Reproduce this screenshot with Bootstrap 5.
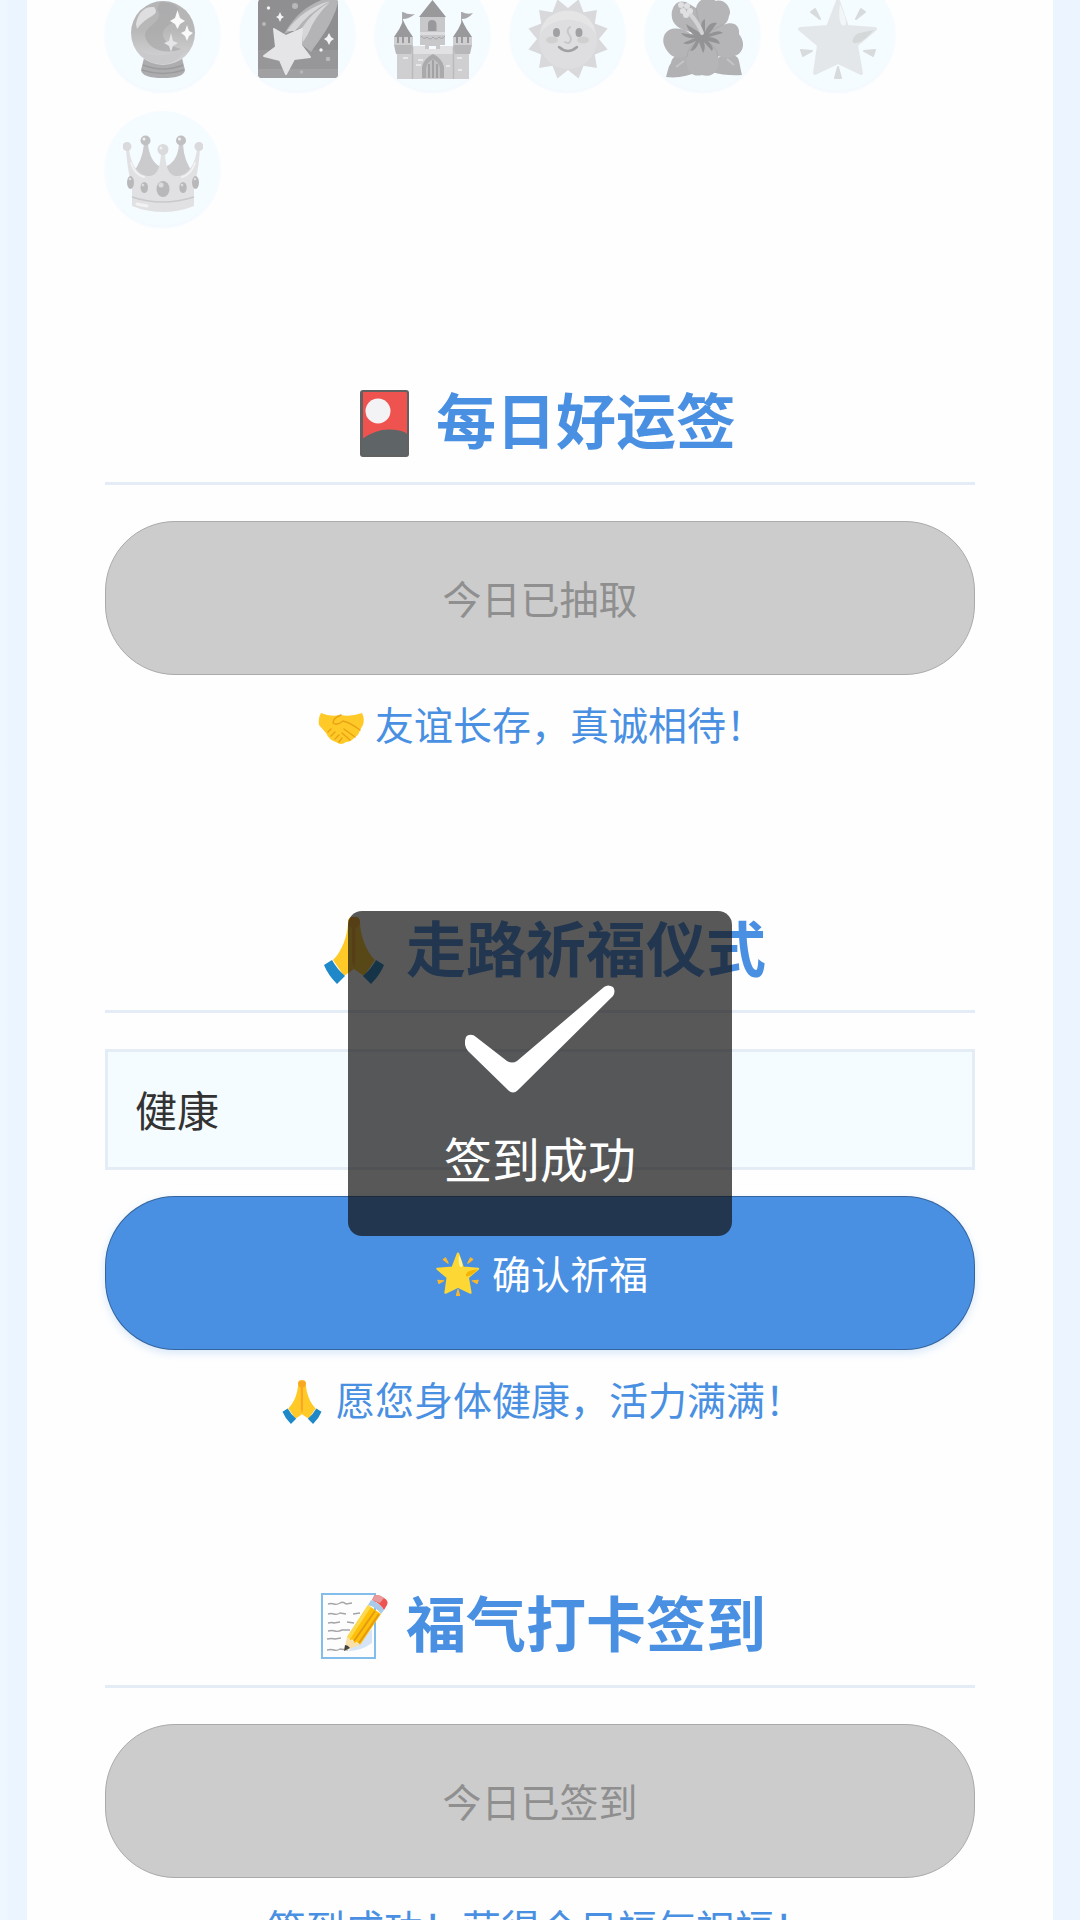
<!DOCTYPE html>
<html lang="zh-CN">
<head>
<meta charset="utf-8">
<meta name="viewport" content="width=device-width, initial-scale=1">
<title>每日好运签</title>
<link href="https://cdn.jsdelivr.net/npm/bootstrap@5.3.0/dist/css/bootstrap.min.css" rel="stylesheet">
<style>
  body { font-family: "Noto Sans CJK SC", "Noto Sans", sans-serif; background: linear-gradient(90deg, #f0f6ff 0, #eaf5ff 14px, #ebf4ff 100%); color: #333; }
  .screen { padding: 0 27px; }
  .sheet { background: #fefefe; padding: 0 78px; }
  .medals { gap: 20px; margin-top: -24px; margin-bottom: 153px; }
  .medal { width: 115px; height: 115px; background: #f5fcff; box-shadow: 0 2px 3px #f1f8ff; padding-top: 10px; }
  .medal svg { width: 80px; height: 80px; }
  .block { margin-bottom: 156px; }
  .block-title { font-size: 60px; line-height: 78px; font-weight: 700; color: #4a90e2; padding-bottom: 25px; border-bottom: 3px solid #e4ecf6; margin-bottom: 36px; gap: 12px; }
  .block-title svg { width: 80px; height: 78px; }
  .pill { height: 154px; border-radius: 70px; font-size: 39px; gap: 8px; border: 1px solid rgba(0,0,0,.2); padding-bottom: 8px; }
  .pill svg { width: 52px; height: 48px; }
  .pill-main, .pill-main:hover { background: #4a90e2; color: #fff; border-color: rgba(0,0,0,.3); box-shadow: 0 3px 8px rgba(74,144,226,.22); }
  .pill-off:disabled { background: #ccc; color: #8f8f8f; opacity: 1; border-color: #aaa; }
  .result { font-size: 39px; line-height: 56px; color: #4a90e2; margin: 20px 0 0; gap: 8px; }
  .result svg { width: 52px; height: 52px; }
  .wish { height: 121px; border: 3px solid #e4ecf6; border-radius: 0; background: #f5fcff; color: #333; font-size: 42px; padding: 0 27px 3px; margin-bottom: 26px; }
  .tip { top: 911px; width: 384px; height: 325px; border-radius: 14px; background: rgba(17,17,17,.7); color: #fff; font-size: 48px; line-height: 70px; padding-top: 74px; gap: 29px; }
  .tip svg { width: 150px; height: 108px; }
</style>
<script src="https://cdn.jsdelivr.net/npm/bootstrap@5.3.0/dist/js/bootstrap.bundle.min.js"></script>
</head>
<body>
<svg width="0" height="0" class="position-absolute" aria-hidden="true">
  <symbol id="pray" viewBox="0 0 80 70">
    <path fill="#ffca28" d="M40 2C35 1 34 4 34 9C33 22 28 36 19 45L30 61L40 54L50 61L61 45C52 36 47 22 46 9C46 4 45 1 40 2Z"/>
    <path fill="#f9a825" d="M34 8C34 3 36 2 40 2S46 3 46 8L44 12 41.500 13V46L40 53 38 46V13L36 12Z"/>
    <path fill="#1e88c9" d="M18 45L10 50Q14 60 23 69L31 61Q23 54 18 45ZM62 45L70 50Q66 60 57 69L49 61Q57 54 62 45Z"/>
  </symbol>
  <symbol id="star" viewBox="0 0 80 80">
    <path fill="#fdd835" stroke="#fdd835" stroke-width="4" stroke-linejoin="round" d="M40 2L49 28 77 30 58 46 63 74 40 63 17 74 21 46 2 30 30 28Z"/>
    <path fill="#fff59d" d="M42 5C45 12 48 19 48 24Q47 29 43 25Q40 18 42 5Z"/>
    <path fill="#f4b400" d="M76 31C68 33 59 33 56 38Q52 45 58 44C65 43 70 37 76 31Z"/>
    <g fill="#fbb72c" stroke="#fbb72c" stroke-width="2" stroke-linejoin="round"><path d="M13 13L17 10 22 20ZM67 13L63 10 58 20ZM3 51L14 52 5 57ZM77 51L66 52 75 57ZM40 68L43 79H37Z"/></g>
  </symbol>
</svg>

<div class="screen vh-100 overflow-hidden position-relative">
<main class="sheet d-flex flex-column">

  <div class="medals d-flex flex-wrap">
    <div class="medal rounded-circle d-flex align-items-center justify-content-center">
      <svg viewBox="0 0 80 80" role="img" aria-label="水晶球">
        <defs><linearGradient id="orb" x2="0" y2="1"><stop stop-color="#b5b5b6"/><stop offset=".45" stop-color="#b8b8b9"/><stop offset="1" stop-color="#d6d6d8"/></linearGradient></defs>
        <path fill="#adadaf" d="M21 59H59L62 71Q61 79 40 79T18 71Z"/>
        <path fill="none" stroke="#9b9b9d" stroke-width="1.500" d="M20 66Q40 74 60 66M19 71Q40 78 61 71"/>
        <circle cx="40" cy="34" r="32" fill="url(#orb)"/>
        <path fill="#a7a7a9" d="M37 3C62 3 59 18 46 26C35 33 39 45 58 50C41 57 24 49 22 37C21 27 43 22 34 10Z" opacity=".65"/>
        <path fill="#c9c9cb" d="M14 50Q34 64 65 47Q54 66 39 65Q22 65 14 50Z"/>
        <path fill="#dedee0" d="M13 25C15 13 22 7 31 8Q36 13 29 17C22 21 17 25 14 30Z"/>
        <path fill="#fafafa" d="M54.500 11L57 19 62 22 57 25 54.500 30 52 25 47 22 52 19ZM64 26L66 32 70 34 66 37 64 42 62 37 58 34 62 32Z"/>
        <path fill="#e5e5e7" d="M48 34L50 42 55 44 50 47 48 53 46 47 41 44 46 42Z"/>
      </svg>
    </div>
    <div class="medal rounded-circle d-flex align-items-center justify-content-center">
      <svg viewBox="0 0 80 80" role="img" aria-label="流星">
        <rect width="80" height="79" rx="4" fill="#8f8f91"/>
        <path fill="#979799" d="M0 51H80V70H0Z"/><path fill="#a1a1a3" d="M0 70H80V75Q80 79 76 79H4Q0 79 0 75Z"/>
        <path fill="#b4b4b6" d="M26 35C38 14 51 6 66 0H76Q80 0 80 4C74 26 62 40 53 53L43 45V29Z"/>
        <path fill="#d6d6d8" d="M29 32C39 17 54 7 72 2Q50 14 37 32ZM44 29Q54 13 72 3Q57 17 50 35L45 43Z"/>
        <path fill="#e5e5e7" stroke="#e5e5e7" stroke-width="2" stroke-linejoin="round" d="M16 30L28 37 44 30 43 46 52 58 36 60 28 75 22 61 6 57 18 48Z"/>
        <g fill="#f3f3f3"><path d="M22 13L23.500 16.500 26 18 23.500 19.500 22 23 20.500 19.500 18 18 20.500 16.500ZM71 34L73 38 76 40 73 42 71 46 69 42 66 40 69 38Z"/><circle cx="10.500" cy="9" r="1.700"/><circle cx="63" cy="51" r="1.700"/></g>
        <g fill="#b8b8ba"><circle cx="37" cy="7" r="3"/><circle cx="6" cy="25" r="2"/><circle cx="70" cy="60" r="2.300"/><circle cx="43.500" cy="73" r="1.700"/></g>
      </svg>
    </div>
    <div class="medal rounded-circle d-flex align-items-center justify-content-center">
      <svg viewBox="0 0 80 80" role="img" aria-label="城堡">
        <path fill="#cfcfd1" d="M4 50H76V80H4Z"/>
        <path fill="#e1e1e3" d="M19 47H33V50H47V47H61V55H19Z"/>
        <path fill="#c8c8ca" d="M27 18H52V46H47V50H43V47H36V50H32V46H27Z"/>
        <path fill="#dddddf" d="M27 33H52V36H27Z"/>
        <path fill="none" stroke="#a5a5a7" d="M28 37Q31 41 34 38Q37 42 40 38Q43 42 46 38Q49 41 52 37"/>
        <path fill="#99999b" d="M39.500 1L53 18H26ZM35 32V25Q35 21 39 21T43.500 25V32Z"/>
        <g id="turret"><path fill="#b7b7b9" d="M1 46H20L18 55H3Z"/><path fill="#cfcfd1" d="M1 38H20V46H1Z"/>
          <path fill="#99999b" d="M10 21C13 28 16 32 20 38H1C5 32 8 28 10 21ZM4 38H6V44H4ZM9 38H11V44H9ZM15 38H17V44H15Z"/>
          <path fill="none" stroke="#aeaeb0" d="M9.500 23V13"/></g>
        <use href="#turret" x="59"/>
        <path fill="#a8a8aa" d="M10 13Q15 16 22 15Q16 20 10 20ZM69 13Q74 16 80 14Q75 20 69 20Z"/>
        <path fill="none" stroke="#bababc" stroke-width="1.500" d="M19.500 48V80M60.500 48V80"/>
        <path fill="#aaaaac" d="M29 79V68Q31 59 40 55Q49 59 51 68V79Z"/><path fill="#c0c0c2" d="M33 79V69Q34 63 40 60Q46 63 47 69V79Z"/>
        <path fill="none" stroke="#98989a" stroke-width="1.500" d="M36 79V65M40 79V61M44 79V65"/>
        <path fill="#e7e7e8" d="M10 58H15V60H10ZM25 60H30V62H25ZM23 65H28V67H23ZM53 66H57V68H53ZM65 70H69V72H65ZM64 58H69V60H64Z"/>
      </svg>
    </div>
    <div class="medal rounded-circle d-flex align-items-center justify-content-center">
      <svg viewBox="0 0 80 80" role="img" aria-label="太阳">
        <path fill="#d9d9db" d="M71 40L79.600 50.600 66.800 55.500 69 69 55.500 66.800 50.600 79.600 40 71 29.400 79.600 24.500 66.800 11 69 13.200 55.500 .400 50.600 9 40 .400 29.400 13.200 24.500 11 11 24.500 13.200 29.400 .400 40 9 50.600 .400 55.500 13.200 69 11 66.800 24.500 79.600 29.400Z"/>
        <circle cx="40" cy="41" r="29" fill="#dedee0"/>
        <path fill="#e5e5e6" d="M12 35C16 4 64 4 68 35C58 17 24 15 12 35Z"/>
        <g fill="#a1a1a3"><ellipse cx="28.500" cy="33.500" rx="3.500" ry="4.500"/><ellipse cx="51" cy="33.500" rx="3.500" ry="4.500"/></g>
        <g fill="#d0d0d0"><ellipse cx="24" cy="41" rx="6" ry="3.500"/><ellipse cx="55" cy="41" rx="6" ry="3.500"/></g>
        <path fill="none" stroke="#c7c7c9" stroke-width="2" stroke-linecap="round" d="M42 28C36 33 43 36 43 40Q42 46 37 43"/>
        <path fill="none" stroke="#a1a1a3" stroke-width="2.500" stroke-linecap="round" d="M31 48Q40 56 49 48"/>
      </svg>
    </div>
    <div class="medal rounded-circle d-flex align-items-center justify-content-center">
      <svg viewBox="0 0 80 80" role="img" aria-label="木槿花">
        <path fill="#b1b1b3" d="M3 78C5 72 5 68 8 64C9 57 15 55 25 56L36 72Q20 80 3 78ZM79 76C77 69 77 64 75 59C69 53 59 55 54 60L49 73Q62 77 79 76Z"/>
        <path fill="#b5b5b7" d="M32 34C14 31 7 24 9 12Q12 0 23 3L33 9C35 -1 46 -3 53 2C62 -1 70 11 66 17Q65 24 60 26C72 21 77 28 76 35C83 44 80 53 74 56Q66 61 55 57C58 74 47 79 39 76C29 79 21 70 24 57Q12 62 5 53C-2 45 -1 35 6 31C13 28 22 30 28 35Z"/>
        <path fill="none" stroke="#aaaaac" d="M24 58Q24 47 37 42M55 58Q54 47 42 41M33 9L37 31M61 25L42 35"/>
        <path fill="#939395" d="M39 35L23 25Q26 34 32 36L18 34Q22 40 32 39L20 44Q25 47 33 42L27 52Q33 52 36 43L40 54Q43 50 41 43L49 52Q52 49 45 42L57 45Q56 39 46 38L60 34Q56 30 46 35L54 24Q46 22 42 33L42 20Q37 22 38 33Z"/>
        <path fill="none" stroke="#d3d3d5" stroke-width="4" stroke-linecap="round" d="M25 13Q35 23 39 34"/>
        <g fill="#e0e0e2"><circle cx="18" cy="6" r="3"/><circle cx="24" cy="7" r="3"/><circle cx="20" cy="12" r="3"/><circle cx="27" cy="12" r="3"/><circle cx="23" cy="16" r="3"/></g>
        <path fill="none" stroke="#c4c4c6" stroke-width="2" d="M13 68L21 62M71 66L64 60"/>
      </svg>
    </div>
    <div class="medal rounded-circle d-flex align-items-center justify-content-center">
      <svg class="opacity-50" viewBox="0 0 80 80" role="img" aria-label="星星" filter="grayscale(1)"><use href="#star"/></svg>
    </div>
    <div class="medal rounded-circle d-flex align-items-center justify-content-center">
      <svg viewBox="0 0 80 80" role="img" aria-label="皇冠">
        <path fill="#cbcbcd" d="M21 10H25C26 22 31 29 36 32L38 44H25L10 38Q19 28 21 10ZM56 10H60Q61 28 70 38L55 44H42L44 32C51 28 55 22 56 10Z"/>
        <path fill="#e1e1e3" d="M3 15H6C8 32 16 42 26 42C35 42 37 32 38 20H42C43 32 45 42 54 42C64 42 72 32 74 15H77C76 32 73 45 71 55V72Q56 78 40 78T9 72V55C7 45 4 32 3 15Z"/>
        <path fill="none" stroke="#f3f3f4" stroke-width="1.800" stroke-linecap="round" d="M8 29Q12 41 21 43M72 29Q68 41 59 43"/>
        <path fill="none" stroke="#c9c9cb" stroke-width="1.500" d="M9 63Q39 73 71 63"/>
        <path stroke="#f2f2f3" stroke-width="3" stroke-linecap="round" d="M14 70L24 72"/>
        <g fill="#dadadc"><circle cx="4" cy="12.500" r="4.500"/><circle cx="76" cy="12.500" r="4.500"/><circle cx="40" cy="15.500" r="5.500"/></g>
        <g fill="#c0c0c2"><circle cx="22.500" cy="6.500" r="5"/><circle cx="58" cy="6.500" r="5"/></g>
        <g fill="#f0f0f0"><circle cx="21" cy="5" r="1.500"/><circle cx="56.500" cy="5" r="1.500"/><circle cx="38" cy="14" r="1.500"/></g>
        <g fill="#b8b8ba"><ellipse cx="7.500" cy="48.500" rx="3.500" ry="6.500"/><ellipse cx="72.500" cy="48.500" rx="3.500" ry="6.500"/><ellipse cx="21.300" cy="53.500" rx="3.700" ry="5.500"/><ellipse cx="60" cy="53.500" rx="3.700" ry="5.500"/><ellipse cx="40" cy="55" rx="6.500" ry="8"/></g>
        <g fill="#dcdcde"><circle cx="38" cy="51" r="2.500"/><circle cx="20" cy="51" r="1.300"/><circle cx="59" cy="51" r="1.300"/><circle cx="7" cy="45" r="1.300"/><circle cx="72" cy="45" r="1.300"/></g>
      </svg>
    </div>
  </div>

  <section class="block">
    <h2 class="block-title d-flex align-items-center justify-content-center">
      <svg viewBox="0 -9 80 78" aria-hidden="true">
        <rect x="16" y="2" width="49" height="67" rx="3" fill="#616161"/><path fill="#ef5350" d="M19 4H62Q63 4 63 6V47L19 51Z"/>
        <path fill="#5f6467" d="M18 51Q32 41 46 41.500T63 46V67H18Z"/><circle cx="34" cy="23" r="12.500" fill="#f3f3f5"/>
      </svg><span>每日好运签</span></h2>
    <button type="button" class="btn pill pill-off w-100" disabled>今日已抽取</button>
    <p class="result d-flex align-items-center justify-content-center">
      <svg viewBox="0 -4 52 52" aria-hidden="true">
        <path fill="#ffca28" d="M6 12Q15 16 25 14Q36 16 47 12Q50 18 48 24L45 29Q44 34 40 36Q36 41 31 41Q26 45 21 41Q14 39 11 32L4 24Q3 17 6 12Z"/>
        <path fill="none" stroke="#e8a414" stroke-width="1.500" stroke-linecap="round" stroke-linejoin="round" d="M26 14Q18 17 18 22Q22 25 28 20Q34 21 45 29M13 31L16 28M16 35L20 31M20 38L24 34M24 41L27 37M29 28L40 36M27 32L35 39"/>
      </svg><span>友谊长存，真诚相待！</span></p>
  </section>

  <section class="block">
    <h2 class="block-title d-flex align-items-center justify-content-center">
      <svg viewBox="0 -9 80 78" aria-hidden="true"><use href="#pray" y="-1" width="80" height="70"/></svg><span>走路祈福仪式</span></h2>
    <input type="text" class="form-control wish" value="健康" aria-label="祈福内容">
    <button type="button" class="btn pill pill-main w-100 d-flex align-items-center justify-content-center">
      <svg viewBox="-7 -8 94 88" aria-hidden="true"><use href="#star" width="80" height="80"/></svg><span>确认祈福</span></button>
    <p class="result d-flex align-items-center justify-content-center">
      <svg viewBox="0 -11 80 80" aria-hidden="true"><use href="#pray" width="80" height="70"/></svg><span>愿您身体健康，活力满满！</span></p>
  </section>

  <section class="block">
    <h2 class="block-title d-flex align-items-center justify-content-center">
      <svg viewBox="0 -9 80 78" aria-hidden="true">
        <rect x="8" y="3" width="53" height="64" fill="#fdfdfe" stroke="#82bdec" stroke-width="2"/>
        <path fill="#d5e5f7" d="M58 38V52Q47 60 34 60Z"/>
        <path fill="none" stroke="#a5a5a7" stroke-width="1.400" d="M14 13Q17 12 20 13T26 12T32 13L38 12M14 23Q17 22 20 23T26 22L32 23M39 23L46 22M14 32Q18 31 20 32L26 31M33 31L40 32M14 40Q18 39 21 40T28 39L36 39M13 48Q18 47 21 48L27 47M13 59Q17 58 20 59T26 58L34 59"/>
        <path fill="#f9dfaa" d="M30 60L33 46 46 54Z"/><path fill="#424242" d="M30 60L31 54Q34 54 36 57Z"/>
        <path fill="#ffc107" d="M33 46L54 14 67 23 46 54Q44 50 40 52Q40 47 36 49Q36 46 33 46Z"/>
        <path fill="#fdd94e" d="M33 46L54 14 57 16 36 48Z"/><path fill="none" stroke="#e59a16" stroke-width="2" d="M40 50L61 20M45 52L65 23"/>
        <path fill="#a9cbe9" d="M54 14L57 9Q66 12 70 19L67 23Q62 16 54 14Z"/>
        <path fill="#ef5350" d="M58 9L60 5Q63 2 70 7Q75 10 73 14L70 19Q66 12 58 9Z"/><path fill="#e99a9c" d="M60 5Q63 2 70 7L66 12L58 9Z"/>
      </svg><span>福气打卡签到</span></h2>
    <button type="button" class="btn pill pill-off w-100" disabled>今日已签到</button>
    <p class="result text-center">签到成功！获得今日福气祝福！</p>
  </section>
</main>

<div class="tip position-absolute start-50 translate-middle-x d-flex flex-column align-items-center" role="status">
  <svg viewBox="0 0 150 108" aria-hidden="true"><path fill="#fff" d="M1 52C3 49 8 49 11 52L42 76Q47 79 52 76L139 2Q143 -1 148 2Q151 6 148 11L53 105Q48 110 43 105L3 66Q-2 60 1 52Z"/></svg>
  <span>签到成功</span>
</div>
</div>
</body>
</html>
